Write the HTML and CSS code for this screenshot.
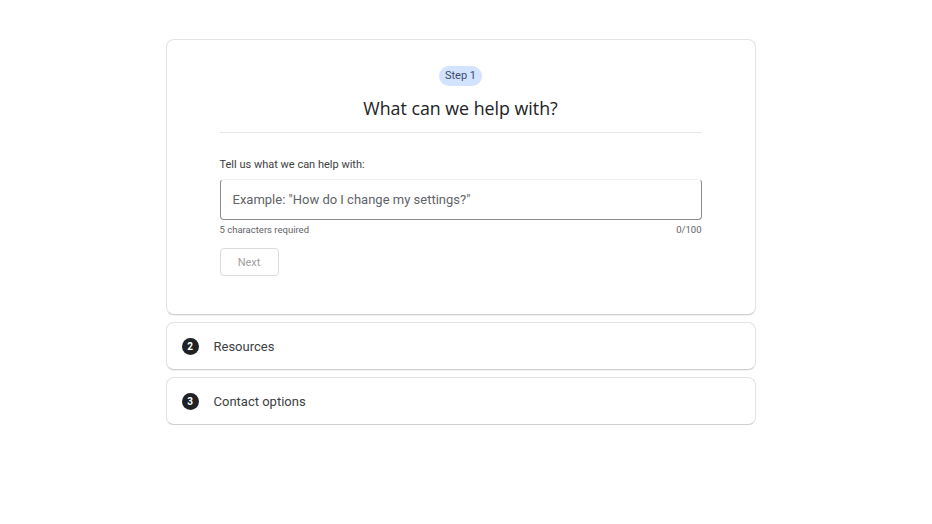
FILE: index.html
```html
<!DOCTYPE html>
<html>
<head>
<meta charset="utf-8">
<link rel="stylesheet" href="styles.css">
</head>
<body>
<main class="wrap">
  <section class="card step-card">
    <div class="badge">Step 1</div>
    <h1 class="title">What can we help with?</h1>
    <hr class="divider">
    <label class="label">Tell us what we can help with:</label>
    <div class="field">Example: "How do I change my settings?"</div>
    <div class="helper"><span>5 characters required</span><span>0/100</span></div>
    <button class="next">Next</button>
  </section>
  <section class="card row-card">
    <span class="num">2</span><span class="row-text">Resources</span>
  </section>
  <section class="card row-card">
    <span class="num">3</span><span class="row-text">Contact options</span>
  </section>
</main>
</body>
</html>
```
FILE: styles.css
```css
html, body { margin: 0; padding: 0; background: #fff; }
body {
  font-family: Roboto, "Open Sans", "Liberation Sans", sans-serif;
  color: #202124;
  padding-right: 11px;
}
.wrap {
  width: 590px;
  margin: 39px auto 0;
  display: flex;
  flex-direction: column;
  gap: 7px;
}
.card {
  box-sizing: border-box;
  border: 1px solid #e3e3e3;
  border-bottom-color: #cfcfcf;
  border-radius: 8px;
  background: #fff;
  box-shadow: 0 1px 1px rgba(0,0,0,0.06);
}
.step-card {
  height: 276px;
  padding: 26px 53px 0;
  display: flex;
  flex-direction: column;
}
.badge {
  align-self: center;
  height: 20px;
  line-height: 20px;
  padding: 0 6px;
  border-radius: 10px;
  background: #d3e3fd;
  color: #3c4a6b;
  font-size: 11px;
}
.title {
  margin: 10px 0 0;
  text-align: center;
  font-family: "Open Sans", Roboto, sans-serif;
  font-weight: 400;
  font-size: 17.8px;
  line-height: 24px;
  color: #202124;
}
.divider {
  margin: 12px 0 0;
  border: 0;
  border-top: 1px solid #e6e6e6;
  height: 0;
}
.label {
  margin-top: 24px;
  font-size: 11px;
  line-height: 16px;
  color: #3c4043;
}
.field {
  box-sizing: border-box;
  margin-top: 6px;
  height: 41px;
  border: 1px solid #8a8a8a;
  border-top-color: #f0f0f0;
  border-radius: 4px;
  padding: 0 12px;
  line-height: 40px;
  font-size: 13px;
  color: #5f6368;
}
.helper {
  display: flex;
  justify-content: space-between;
  margin-top: 3px;
  font-size: 9.5px;
  line-height: 13px;
  color: #5f6368;
}
.next {
  align-self: flex-start;
  margin-top: 12px;
  width: 59px;
  height: 28px;
  border: 1px solid #dadce0;
  border-radius: 4px;
  background: #fff;
  color: #a0a0a0;
  font-family: Roboto, sans-serif;
  font-size: 11px;
  padding: 0;
}
.row-card {
  height: 48px;
  display: flex;
  align-items: center;
  padding-left: 15px;
}
.num {
  width: 17px;
  height: 17px;
  border-radius: 50%;
  background: #202124;
  color: #fff;
  font-size: 10px;
  font-weight: 700;
  display: flex;
  align-items: center;
  justify-content: center;
}
.row-text {
  margin-left: 15px;
  font-size: 13px;
  color: #3c4043;
}
```
